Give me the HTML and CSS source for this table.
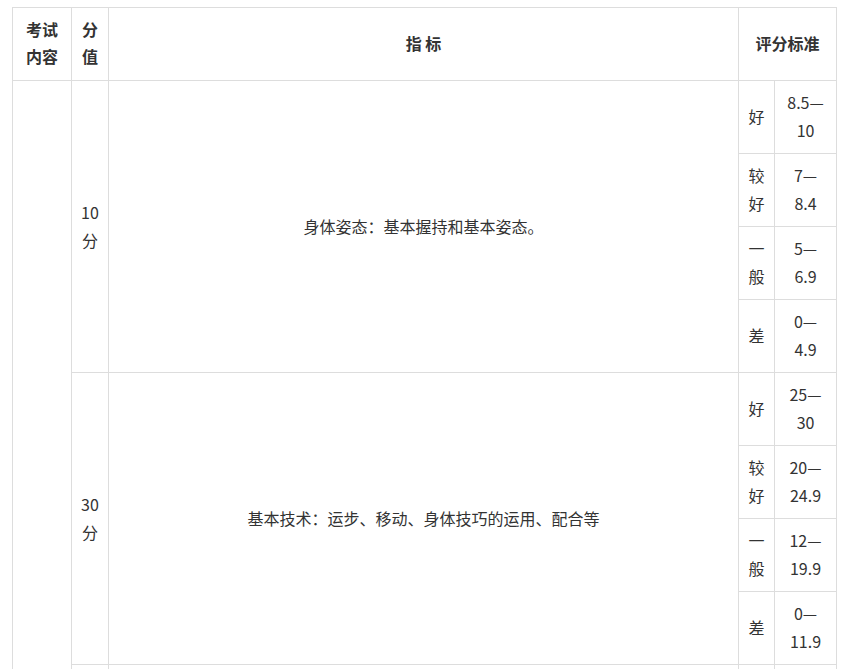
FILE: index.html
```html
<!DOCTYPE html>
<html lang="zh-CN">
<head>
  <meta charset="UTF-8" />
  <meta name="viewport" content="width=device-width, initial-scale=1.0" />
  <title>考试评分标准</title>
  <link rel="stylesheet" href="styles.css">
</head>
<body>

<table class="score-table">
  <colgroup>
    <col class="col-subject">
    <col class="col-points">
    <col class="col-index">
    <col class="col-level">
    <col class="col-range">
  </colgroup>
  <thead>
    <tr>
      <th>考试内容</th>
      <th>分值</th>
      <th>指 标</th>
      <th colspan="2">评分标准</th>
    </tr>
  </thead>
  <tbody>
    <tr>
      <td rowspan="9"></td>
      <td rowspan="4">10分</td>
      <td rowspan="4">身体姿态：基本握持和基本姿态。</td>
      <td>好</td>
      <td>8.5—10</td>
    </tr>
    <tr>
      <td>较好</td>
      <td>7—8.4</td>
    </tr>
    <tr>
      <td>一般</td>
      <td>5—6.9</td>
    </tr>
    <tr>
      <td>差</td>
      <td>0—4.9</td>
    </tr>

    <tr>
      <td rowspan="4">30分</td>
      <td rowspan="4">基本技术：运步、移动、身体技巧的运用、配合等</td>
      <td>好</td>
      <td>25—30</td>
    </tr>
    <tr>
      <td>较好</td>
      <td>20—24.9</td>
    </tr>
    <tr>
      <td>一般</td>
      <td>12—19.9</td>
    </tr>
    <tr>
      <td>差</td>
      <td>0—11.9</td>
    </tr>

    <!-- next block continues below the fold -->
    <tr>
      <td></td>
      <td></td>
      <td></td>
      <td></td>
    </tr>
  </tbody>
</table>

</body>
</html>
```

FILE: styles.css
```css
body {
  margin: 0;
  padding: 7px 0 0 12px;
  background-color: #ffffff;
  color: #333;
  font-family: "Noto Sans CJK SC", "Noto Sans", sans-serif;
  font-size: 16px;
}
.score-table {
  border-collapse: collapse;
  table-layout: fixed;
  width: 824px;
}
.col-subject { width: 59px; }
.col-points { width: 37px; }
.col-index { width: 630px; }
.col-level { width: 36px; }
.col-range { width: 62px; }
.score-table th,
.score-table td {
  border: 1px solid #dddddd;
  padding: 7px 8px 9px;
  height: 56px;
  line-height: 28px;
  text-align: center;
  vertical-align: middle;
}
.score-table th {
  font-weight: bold;
  line-height: 27px;
}
```
